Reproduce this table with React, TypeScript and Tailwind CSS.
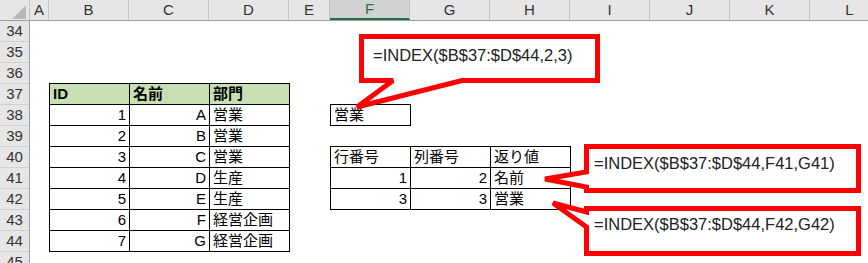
const columns = [
  { label: "A", cls: "w-[19px]" },
  { label: "B", cls: "w-[80px]" },
  { label: "C", cls: "w-[80px]" },
  { label: "D", cls: "w-[80px]" },
  { label: "E", cls: "w-[41px]" },
  { label: "F", cls: "w-[80px]", active: true },
  { label: "G", cls: "w-[80px]" },
  { label: "H", cls: "w-[80px]" },
  { label: "I", cls: "w-[80px]" },
  { label: "J", cls: "w-[80px]" },
  { label: "K", cls: "w-[80px]" },
  { label: "L", cls: "w-[80px]" },
]

const rowNumbers = [34, 35, 36, 37, 38, 39, 40, 41, 42, 43, 44, 45]

const staff = [
  { id: 1, name: "A", dept: "営業" },
  { id: 2, name: "B", dept: "営業" },
  { id: 3, name: "C", dept: "営業" },
  { id: 4, name: "D", dept: "生産" },
  { id: 5, name: "E", dept: "生産" },
  { id: 6, name: "F", dept: "経営企画" },
  { id: 7, name: "G", dept: "経営企画" },
]

const lookups = [
  { row: 1, col: 2, value: "名前" },
  { row: 3, col: 3, value: "営業" },
]

const cell = "border-r border-b border-black px-[3px] leading-[20px] whitespace-nowrap overflow-hidden"

function Callouts() {
  return (
    <>
      <svg className="absolute left-0 top-0 pointer-events-none" width="868" height="263" viewBox="0 0 868 263">
        <g fill="#ffffff" stroke="#ff0000" strokeWidth="5" strokeMiterlimit="3">
          <path d="M361.5,36.5 H597.5 V80.5 H462 L357,107 L393,80.5 H361.5 Z" />
          <path d="M586.5,146.5 H858.5 V190.5 H586.5 V187 L545,179 L586.5,172 Z" />
          <path d="M586.5,208.5 H858.5 V253.5 H586.5 V227 L553,203 L586.5,212 Z" />
        </g>
      </svg>
      <div className="absolute left-[373px] top-[47px] text-[16.5px] leading-none text-[#222]">=INDEX($B$37:$D$44,2,3)</div>
      <div className="absolute left-[594px] top-[155px] text-[16.5px] leading-none text-[#222]">=INDEX($B$37:$D$44,F41,G41)</div>
      <div className="absolute left-[594px] top-[216px] text-[16.5px] leading-none text-[#222]">=INDEX($B$37:$D$44,F42,G42)</div>
    </>
  )
}

export default function App() {
  return (
    <div className="relative w-[868px] h-[263px] overflow-hidden bg-white text-black font-['Liberation_Sans','Noto_Sans_CJK_JP',sans-serif]">
      {/* column headers */}
      <div className="flex h-[21px] bg-[#e6e6e6] border-b border-[#9e9e9e]">
        <div className="relative w-[30px] shrink-0 border-r border-[#c4c4c4]">
          <svg className="absolute left-[12px] top-[5px]" width="14" height="14" viewBox="0 0 14 14">
            <polygon points="14,0 14,14 0,14" fill="#b9b9b9" />
          </svg>
        </div>
        {columns.map((c) =>
          c.active ? (
            <div
              key={c.label}
              className={`${c.cls} shrink-0 flex items-center justify-center bg-[#d2d2d2] border-r border-[#c4c4c4] border-b-2 border-b-[#217346] text-[#217346] text-[15px]`}
            >
              {c.label}
            </div>
          ) : (
            <div
              key={c.label}
              className={`${c.cls} shrink-0 flex items-center justify-center border-r border-[#c4c4c4] text-[#333] text-[15px]`}
            >
              {c.label}
            </div>
          )
        )}
      </div>

      <div className="flex">
        {/* row headers */}
        <div className="w-[30px] shrink-0 bg-[#e6e6e6] border-r border-[#9e9e9e]">
          {rowNumbers.map((n) => (
            <div key={n} className="h-[21px] border-b border-[#d0d0d0] flex items-center justify-center text-[15px] text-[#333]">
              {n}
            </div>
          ))}
        </div>

        {/* sheet body */}
        <div className="grid grid-cols-[19px_80px_80px_80px_41px_80px_80px_80px_80px_80px_80px_80px] grid-rows-[repeat(12,21px)] text-[15px]">
          {/* B37:D44 */}
          <div className="col-start-2 col-span-3 row-start-4 row-span-8 w-[241px] h-[169px] self-start justify-self-start -mt-px grid grid-cols-[80px_80px_80px] grid-rows-[repeat(8,21px)] border-l border-t border-black">
            <div className={`${cell} bg-[#c6e0b4] font-bold`}>ID</div>
            <div className={`${cell} bg-[#c6e0b4] font-bold`}>名前</div>
            <div className={`${cell} bg-[#c6e0b4] font-bold`}>部門</div>
            {staff.map((s) => (
              <div key={s.id} className="contents">
                <div className={`${cell} text-right`}>{s.id}</div>
                <div className={`${cell} text-right`}>{s.name}</div>
                <div className={cell}>{s.dept}</div>
              </div>
            ))}
          </div>

          {/* F38 */}
          <div className="col-start-6 row-start-5 w-[81px] h-[22px] self-start justify-self-start -mt-px border-l border-t border-black">
            <div className={`${cell} h-[21px]`}>営業</div>
          </div>

          {/* F40:H42 */}
          <div className="col-start-6 col-span-3 row-start-7 row-span-3 w-[241px] h-[64px] self-start justify-self-start -mt-px grid grid-cols-[80px_80px_80px] grid-rows-[repeat(3,21px)] border-l border-t border-black">
            <div className={cell}>行番号</div>
            <div className={cell}>列番号</div>
            <div className={cell}>返り値</div>
            {lookups.map((l) => (
              <div key={l.value} className="contents">
                <div className={`${cell} text-right`}>{l.row}</div>
                <div className={`${cell} text-right`}>{l.col}</div>
                <div className={cell}>{l.value}</div>
              </div>
            ))}
          </div>
        </div>
      </div>

      <Callouts />
    </div>
  )
}
